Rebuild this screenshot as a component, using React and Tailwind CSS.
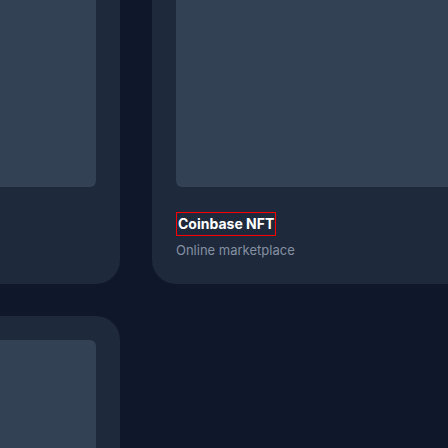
import React from "react";

const items = [
  { id: 1 },
  { id: 2, name: "Coinbase NFT", desc: "Online marketplace", selected: true },
  { id: 3 },
];

export default function App() {
  return (
    <div
      className="w-[448px] h-[448px] overflow-hidden bg-[#0f172a]"
      style={{ fontFamily: "Inter, 'Noto Sans', sans-serif" }}
    >
      <div className="grid grid-cols-[340px_340px] gap-8 -ml-[220px] -mt-[129px]">
        {items.map((item) => (
          <div key={item.id} className="flex flex-col rounded-3xl bg-[#1e293b] p-6">
            <div className="aspect-square w-full rounded-md bg-[#334155]" />
            {/* title + subtitle block, kept at the same height for every card */}
            <div className="mt-[25px] h-[48px]">
              {item.name && (
                <>
                  <h3
                    className={`w-fit border px-px text-sm font-bold leading-[22px] text-white ${
                      item.selected ? "border-[#ff0000]" : "border-transparent"
                    }`}
                  >
                    {item.name}
                  </h3>
                  <p className="mt-1 text-[13px] leading-5 text-[#8590a2]">{item.desc}</p>
                </>
              )}
            </div>
          </div>
        ))}
      </div>
    </div>
  );
}
